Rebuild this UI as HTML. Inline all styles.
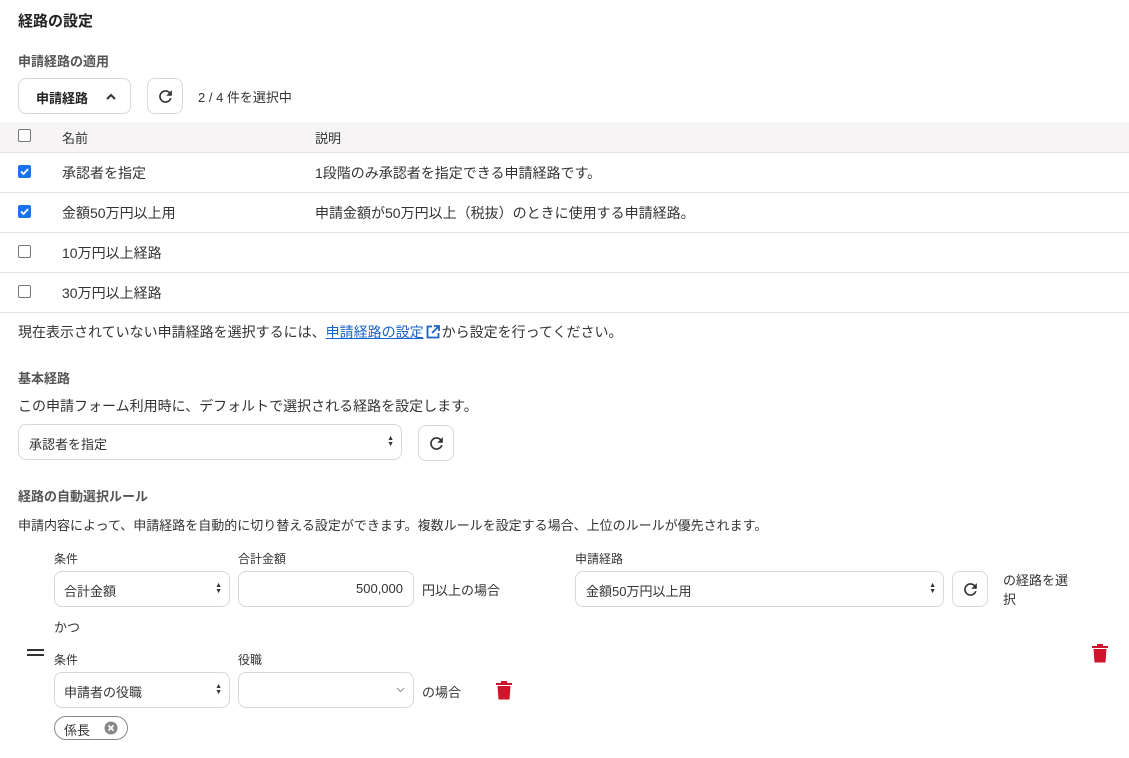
<!DOCTYPE html>
<html><head><meta charset="utf-8"><style>
*{box-sizing:border-box;margin:0;padding:0}
body{width:1129px;height:758px;background:#fff;font-family:"Liberation Sans","Noto Sans CJK JP",sans-serif;color:#333;font-size:14px;position:relative;overflow:hidden}
.a{position:absolute;white-space:nowrap}
.h2{font-size:13px;font-weight:bold;color:#555}
.box{position:absolute;border:1px solid #d8d8d8;border-radius:8px;background:#fff}
.cb{position:absolute;width:13px;height:13px;border:1px solid #767676;border-radius:2px;background:#fff}
.cb.on{background:#1a73e8;border-color:#1a73e8}
.row{position:absolute;left:0;width:1129px;height:40px;border-bottom:1px solid #e3e3e3}
.sm{font-size:13px}
.arr{position:absolute;right:7px;top:50%;transform:translateY(-50%);font-size:7px;line-height:6px;color:#333}
</style></head><body>
<div class="a" style="left:18px;top:10px;font-size:15px;font-weight:bold;color:#222">経路の設定</div>
<div class="a h2" style="left:18px;top:51px">申請経路の適用</div>
<div class="box" style="left:18px;top:78px;width:113px;height:36px"><span class="a" style="left:17px;top:9px;font-size:13px;font-weight:bold;color:#222">申請経路</span>
<svg class="a" style="left:86px;top:13px" width="12" height="10" viewBox="0 0 12 10"><path d="M2 7 L6 3 L10 7" fill="none" stroke="#333" stroke-width="2"/></svg></div>
<div class="box" style="left:147px;top:78px;width:36px;height:36px"><svg class="a" style="left:8px;top:8px" width="19" height="19" viewBox="0 0 24 24"><path d="M17.65 6.35A7.95 7.95 0 0 0 12 4a8 8 0 1 0 7.73 10h-2.08A6 6 0 1 1 12 6c1.66 0 3.14.69 4.22 1.78L13 11h7V4z" fill="#333"/></svg></div>
<div class="a sm" style="left:198px;top:87px">2 / 4 件を選択中</div>
<div style="position:absolute;left:0;top:122px;width:1129px;height:31px;background:#f6f4f4;border-bottom:1px solid #e3e3e3"></div>
<div class="cb" style="left:18px;top:129px"></div>
<div class="a sm" style="left:62px;top:128px">名前</div>
<div class="a sm" style="left:315px;top:128px">説明</div>
<div class="row" style="top:153px"></div><div class="row" style="top:193px"></div><div class="row" style="top:233px"></div><div class="row" style="top:273px"></div>
<div class="cb on" style="left:18px;top:165px"><svg width="11" height="11" viewBox="0 0 11 11" style="position:absolute;left:0;top:0"><path d="M2 5.5L4.5 8 9 3" stroke="#fff" stroke-width="1.8" fill="none"/></svg></div>
<div class="cb on" style="left:18px;top:205px"><svg width="11" height="11" viewBox="0 0 11 11" style="position:absolute;left:0;top:0"><path d="M2 5.5L4.5 8 9 3" stroke="#fff" stroke-width="1.8" fill="none"/></svg></div>
<div class="cb" style="left:18px;top:245px"></div><div class="cb" style="left:18px;top:285px"></div>
<div class="a" style="left:62px;top:163px">承認者を指定</div><div class="a" style="left:315px;top:163px">1段階のみ承認者を指定できる申請経路です。</div>
<div class="a" style="left:62px;top:203px">金額50万円以上用</div><div class="a" style="left:315px;top:203px">申請金額が50万円以上（税抜）のときに使用する申請経路。</div>
<div class="a" style="left:62px;top:243px">10万円以上経路</div>
<div class="a" style="left:62px;top:283px">30万円以上経路</div>
<div class="a" style="left:18px;top:322px">現在表示されていない申請経路を選択するには、<span style="color:#1a63c8;text-decoration:underline">申請経路の設定</span><svg width="16" height="16" viewBox="0 0 16 16" style="vertical-align:-3px;margin:0 1px"><path d="M7 2.5H2.5v11h11V9M9 2h5v5M14 2L7 9" fill="none" stroke="#1a63c8" stroke-width="1.8"/></svg>から設定を行ってください。</div>
<div class="a h2" style="left:18px;top:368px">基本経路</div>
<div class="a" style="left:18px;top:396px">この申請フォーム利用時に、デフォルトで選択される経路を設定します。</div>
<div class="box" style="left:18px;top:424px;width:384px;height:36px"><span class="a sm" style="left:10px;top:9px">承認者を指定</span><span class="arr">▲<br>▼</span></div>
<div class="box" style="left:418px;top:425px;width:36px;height:36px"><svg class="a" style="left:8px;top:8px" width="19" height="19" viewBox="0 0 24 24"><path d="M17.65 6.35A7.95 7.95 0 0 0 12 4a8 8 0 1 0 7.73 10h-2.08A6 6 0 1 1 12 6c1.66 0 3.14.69 4.22 1.78L13 11h7V4z" fill="#333"/></svg></div>
<div class="a h2" style="left:18px;top:486px">経路の自動選択ルール</div>
<div class="a sm" style="left:18px;top:515px">申請内容によって、申請経路を自動的に切り替える設定ができます。複数ルールを設定する場合、上位のルールが優先されます。</div>
<div class="a" style="left:54px;top:550px;font-size:12px">条件</div>
<div class="a" style="left:238px;top:550px;font-size:12px">合計金額</div>
<div class="a" style="left:575px;top:550px;font-size:12px">申請経路</div>
<div class="box" style="left:54px;top:571px;width:176px;height:36px"><span class="a sm" style="left:9px;top:9px">合計金額</span><span class="arr">▲<br>▼</span></div>
<div class="box" style="left:238px;top:571px;width:176px;height:36px"><span class="a sm" style="right:10px;top:9px">500,000</span></div>
<div class="a sm" style="left:422px;top:580px">円以上の場合</div>
<div class="box" style="left:575px;top:571px;width:369px;height:36px"><span class="a sm" style="left:10px;top:9px">金額50万円以上用</span><span class="arr">▲<br>▼</span></div>
<div class="box" style="left:952px;top:571px;width:36px;height:36px"><svg class="a" style="left:8px;top:8px" width="19" height="19" viewBox="0 0 24 24"><path d="M17.65 6.35A7.95 7.95 0 0 0 12 4a8 8 0 1 0 7.73 10h-2.08A6 6 0 1 1 12 6c1.66 0 3.14.69 4.22 1.78L13 11h7V4z" fill="#333"/></svg></div>
<div class="a sm" style="left:1003px;top:571px;line-height:19px">の経路を選<br>択</div>
<div class="a sm" style="left:54px;top:617px">かつ</div>
<div class="a" style="left:27px;top:649px;width:17px;height:2px;background:#333"></div>
<div class="a" style="left:27px;top:654px;width:17px;height:2px;background:#333"></div>
<div class="a" style="left:54px;top:651px;font-size:12px">条件</div>
<div class="a" style="left:238px;top:651px;font-size:12px">役職</div>
<svg class="a" style="left:1091px;top:643px" width="18" height="20" viewBox="0 0 18 20"><path d="M1 3h16v2H1zM6 1h6v2H6zM2.5 6h13l-1 13.5h-11z" fill="#d0142c"/></svg>
<div class="box" style="left:54px;top:672px;width:176px;height:36px"><span class="a sm" style="left:9px;top:9px">申請者の役職</span><span class="arr">▲<br>▼</span></div>
<div class="box" style="left:238px;top:672px;width:176px;height:36px"><svg class="a" style="right:8px;top:14px" width="9" height="6" viewBox="0 0 9 6"><path d="M1 1l3.5 3.5L8 1" fill="none" stroke="#999" stroke-width="1.2"/></svg></div>
<div class="a sm" style="left:422px;top:682px">の場合</div>
<svg class="a" style="left:496px;top:680px" width="16" height="20" viewBox="0 0 16 20"><path d="M0 3h16v2H0zM5 1h6v2H5zM1.5 6h13l-1 13.5h-11z" fill="#d0142c"/></svg>
<div style="position:absolute;left:54px;top:716px;width:74px;height:24px;border:1px solid #888;border-radius:12px"><span class="a sm" style="left:9px;top:3px">係長</span><svg class="a" style="left:49px;top:4px" width="14" height="14" viewBox="0 0 14 14"><circle cx="7" cy="7" r="6.5" fill="#888"/><path d="M4.5 4.5l5 5M9.5 4.5l-5 5" stroke="#fff" stroke-width="1.6"/></svg></div>
</body></html>
